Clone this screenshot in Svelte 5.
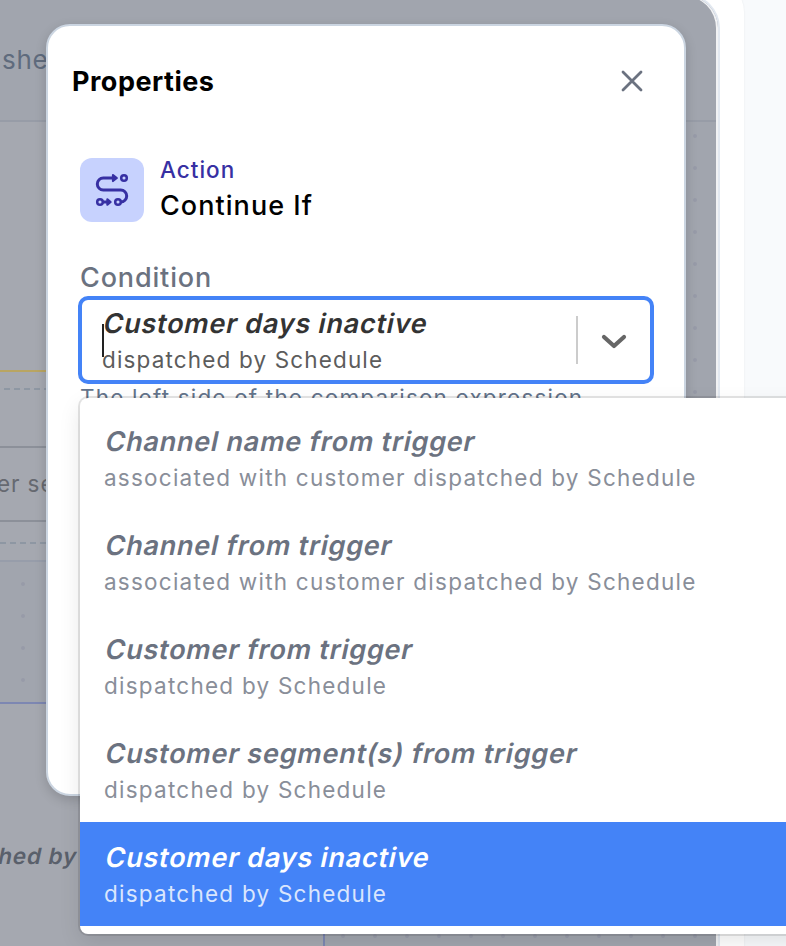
<script>
  const options = [
    { title: 'Channel name from trigger', detail: 'associated with customer dispatched by Schedule' },
    { title: 'Channel from trigger', detail: 'associated with customer dispatched by Schedule' },
    { title: 'Customer from trigger', detail: 'dispatched by Schedule' },
    { title: 'Customer segment(s) from trigger', detail: 'dispatched by Schedule' },
    { title: 'Customer days inactive', detail: 'dispatched by Schedule', selected: true }
  ];
</script>

<div class="stage">
  <div class="page-card"></div>
  <div class="editor">
    <header><span>she</span></header>
    <div class="canvas">
      <svg width="716" height="824" viewBox="0 122 716 824">
        <defs>
          <pattern id="dots" x="7" y="120" width="32" height="32" patternUnits="userSpaceOnUse">
            <circle cx="16" cy="16" r="2" fill="#979ba8" />
          </pattern>
        </defs>
        <rect x="0" y="122" width="716" height="824" fill="url(#dots)" />
        <rect x="0" y="122" width="200" height="438" fill="#a5a8b0" />
        <rect x="0" y="704" width="323" height="242" fill="#a5a8b0" />
        <path d="M0 371H60" stroke="#b9a562" stroke-width="2" />
        <path d="M4 389H60M0 543H60" stroke="#8e97a3" stroke-width="2" stroke-dasharray="6 4" />
        <path d="M0 447H60M0 521H60" stroke="#8c9099" stroke-width="2" />
        <path d="M0 561H60" stroke="#979daa" stroke-width="2" />
        <path d="M0 703H60M324 704V946" stroke="#7d87b2" stroke-width="2" />
      </svg>
      <span class="node-text">er se</span>
      <span class="edge-text">hed by</span>
    </div>
  </div>

  <section class="modal">
    <div class="modal-head">
      <h1>Properties</h1>
      <svg width="24" height="24" viewBox="0 0 24 24"><path d="M3 3L21 21M21 3L3 21" stroke="#6b7280" stroke-width="2.8" stroke-linecap="round" /></svg>
    </div>
    <div class="action">
      <div class="badge">
        <svg width="64" height="64" viewBox="80 158 64 64" fill="none" stroke="#3730a3" stroke-width="3">
          <path d="M113 178H103.3A6 6 0 0 0 103.3 190H120.7A6 6 0 0 1 120.7 202" />
          <circle cx="124" cy="178" r="2.8" stroke-width="2.5" />
          <circle cx="100" cy="202" r="2.8" stroke-width="2.5" />
          <circle cx="118" cy="202" r="2.8" stroke-width="2.5" />
          <path d="M103 202H107" />
          <path d="M113 175L116.8 178L113 181ZM107.4 199.3L110.6 202L107.4 204.7Z" fill="#3730a3" stroke-width="2.2" stroke-linejoin="round" />
        </svg>
      </div>
      <div class="names">
        <span class="kind">Action</span>
        <span class="name">Continue If</span>
      </div>
    </div>
    <div class="label">Condition</div>
    <div class="select">
      <div class="value">
        <b>Customer days inactive</b>
        <span>dispatched by Schedule</span>
        <i class="caret"></i>
      </div>
      <div class="divider"></div>
      <svg class="chevron" width="26" height="18" viewBox="0 0 26 18" fill="none"><path d="M3 4L13 13L23 4" stroke="#666" stroke-width="4.2" stroke-linecap="round" stroke-linejoin="round" /></svg>
    </div>
    <div class="help">The left side of the comparison expression</div>
  </section>

  <div class="menu">
    {#each options as o}
      <div class="option" class:selected={o.selected}>
        <b>{o.title}</b>
        <span>{o.detail}</span>
      </div>
    {/each}
  </div>
</div>

<style>
  .stage {
    position: relative; width: 786px; height: 946px; overflow: hidden;
    background: #f8fafc; font-family: Inter, "Liberation Sans", sans-serif; white-space: nowrap;
  }
  .stage * { box-sizing: border-box; }
  .page-card {
    position: absolute; left: -40px; top: -20px; width: 784px; height: 1000px;
    border-radius: 32px; background: #fff; box-shadow: 0 0 2px rgba(15, 23, 42, 0.08);
  }
  .editor {
    position: absolute; left: -40px; top: -6px; width: 760px; height: 980px; padding-left: 40px;
    border: 2px solid #e2e8f0; border-left: 0; border-radius: 0 34px 0 0;
    background: #a1a5ae; box-shadow: inset -2px 0 #f1f2f4; overflow: hidden;
  }
  header { display: flex; height: 126px; padding: 46px 0 0 2px; border-bottom: 2px solid #979ca7; margin-right: 2px; }
  header span { font-size: 26px; line-height: 36px; color: #5f6b7d; letter-spacing: 0.7px; }
  .canvas { position: relative; }
  .canvas svg { display: block; }
  .node-text { position: absolute; left: -3px; top: 347px; font-size: 22.5px; line-height: 30px; color: #666970; letter-spacing: 0.9px; }
  .edge-text { position: absolute; left: -3px; top: 719px; font-size: 22.5px; line-height: 30px; font-weight: 570; color: #5a606b; letter-spacing: 0.9px; transform: skewX(-12deg); transform-origin: 0 75%; }

  .modal {
    position: absolute; left: 46px; top: 24px; width: 640px; height: 772px;
    border: 2px solid #cbd5e1; border-radius: 24px; background: #fff; padding: 36px 30px 0 24px;
    box-shadow: 0 4px 12px rgba(0, 0, 0, 0.16);
  }
  .modal-head { display: flex; justify-content: space-between; align-items: center; height: 38px; padding-right: 10px; }
  h1 { margin: 2px 0 0; font-size: 27px; font-weight: 650; line-height: 38px; color: #000; letter-spacing: 0.5px; }
  .action { display: flex; gap: 16px; margin: 58px 0 0 8px; }
  .badge { width: 64px; height: 64px; border-radius: 12px; background: #c7d2fe; }
  .badge svg { display: block; }
  .names { display: flex; flex-direction: column; }
  .kind { font-size: 22.5px; font-weight: 500; line-height: 24px; color: #3730a3; letter-spacing: 1px; }
  .name { font-size: 27px; font-weight: 500; line-height: 32px; margin-top: 8px; color: #000; letter-spacing: 1.05px; }
  .label { margin: 38px 0 0 8px; font-size: 27px; font-weight: 500; line-height: 36px; color: #6b7280; letter-spacing: 0.85px; }
  .select {
    display: flex; align-items: center; width: 576px; height: 88px; margin: 0 0 0 6px; padding-left: 20px;
    border: 4px solid #4483f7; border-radius: 10px; background: #fff;
  }
  .value { position: relative; width: 474px; display: flex; flex-direction: column; padding-top: 4px; color: #333; }
  .value b, .option b {
    align-self: flex-start; font-size: 27px; line-height: 36px; font-weight: 560; letter-spacing: 0.78px;
    transform: skewX(-12deg); transform-origin: 0 75%;
  }
  .value span { font-size: 22.5px; line-height: 36px; color: #5c5c5c; letter-spacing: 1.15px; }
  .caret { position: absolute; left: 0; top: 22px; width: 2px; height: 33px; background: #222; }
  .divider { width: 2px; height: 48px; background: #ccc; }
  .chevron { margin: 4px 0 0 23px; }
  .help { margin: -1px 0 0 8px; font-size: 22.5px; line-height: 30px; color: #64748b; letter-spacing: 1.18px; }

  .menu {
    position: absolute; left: 80px; top: 398px; width: 730px; height: 536px; padding-top: 8px;
    background: #fff; border-radius: 8px;
    box-shadow: 0 0 0 2px rgba(0, 0, 0, 0.1), 0 8px 22px rgba(0, 0, 0, 0.1);
  }
  .option { display: flex; flex-direction: column; height: 104px; padding: 18px 24px 14px; color: #6b7280; }
  .option span { font-size: 22.5px; line-height: 36px; color: #898e99; letter-spacing: 1.24px; }
  .selected { background: #4483f7; color: #fff; }
  .selected span { color: #dae6fd; }
</style>
